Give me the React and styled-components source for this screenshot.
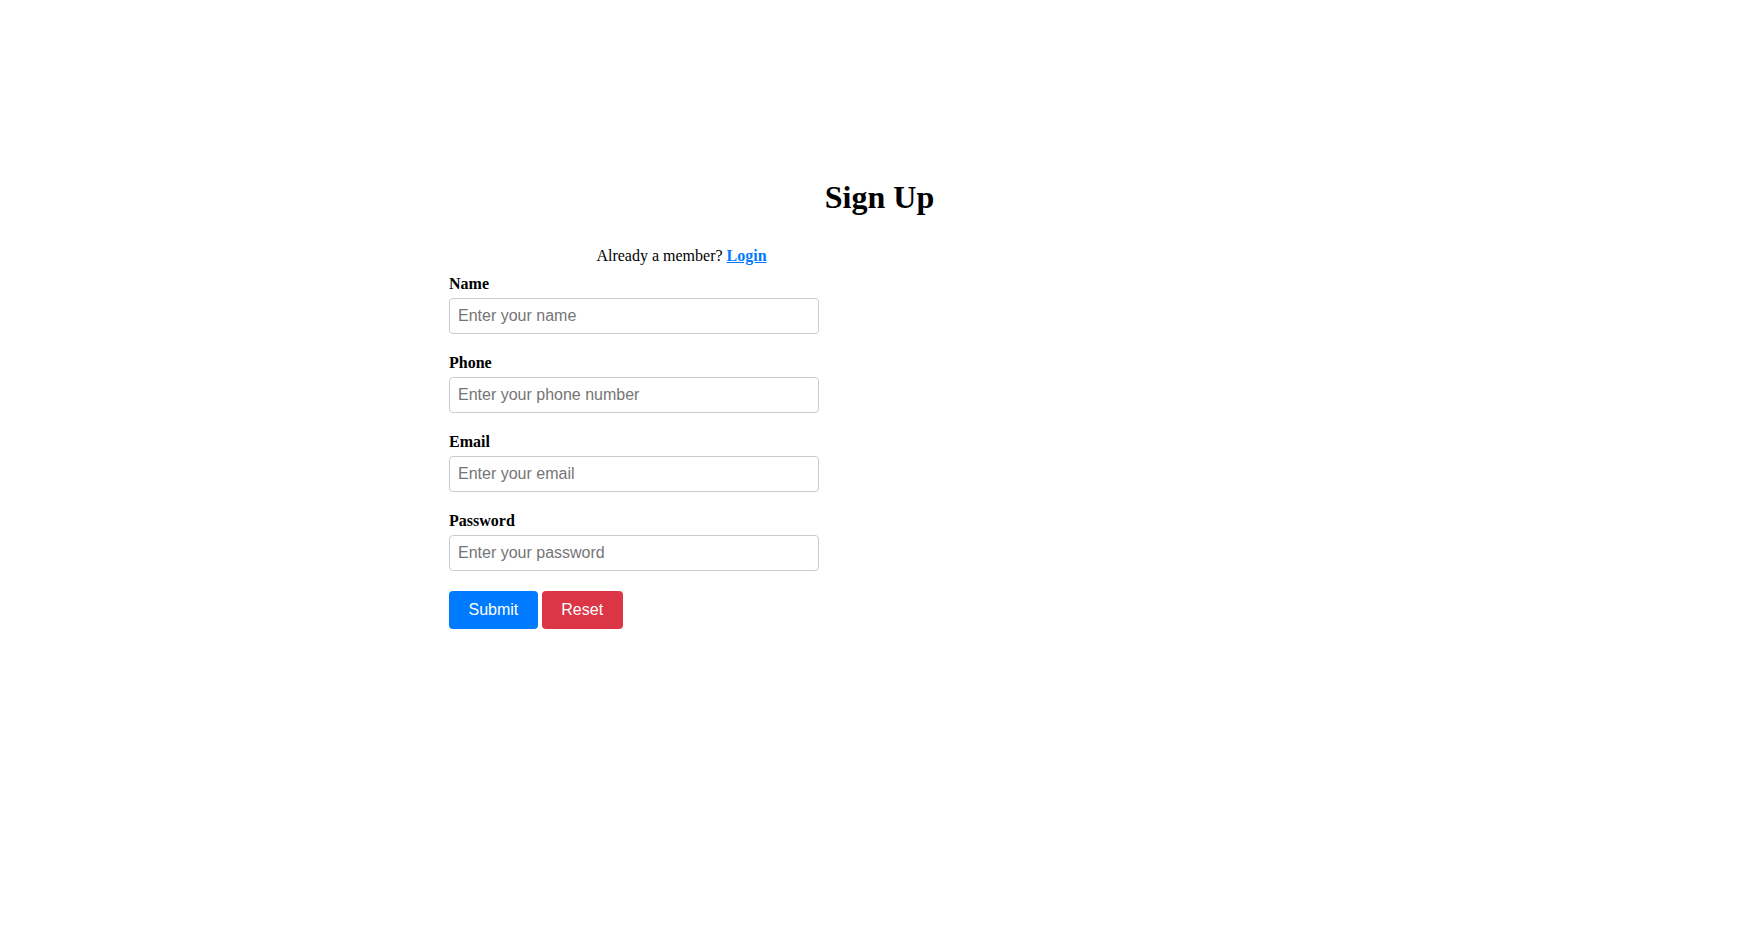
import styled, { createGlobalStyle } from "styled-components";

const GlobalStyle = createGlobalStyle`
  body {
    margin: 0;
    background: #fff;
    font-family: "Liberation Serif", "Times New Roman", serif;
    color: #000;
  }
`;

export default function App() {
  return (
    <>
      <GlobalStyle />
      <Page>
        <Title>Sign Up</Title>
        <FormWrapper>
          <MemberText>
            Already a member? <LoginLink href="#">Login</LoginLink>
          </MemberText>
          <form>
            <Field>
              <Label>Name</Label>
              <Input type="text" placeholder="Enter your name" />
            </Field>
            <Field>
              <Label>Phone</Label>
              <Input type="text" placeholder="Enter your phone number" />
            </Field>
            <Field>
              <Label>Email</Label>
              <Input type="email" placeholder="Enter your email" />
            </Field>
            <Field>
              <Label>Password</Label>
              <Input type="password" placeholder="Enter your password" />
            </Field>
            <ButtonRow>
              <Button type="button" $color="#007bff">
                Submit
              </Button>
              <Button type="button" $color="#dc3545">
                Reset
              </Button>
            </ButtonRow>
          </form>
        </FormWrapper>
      </Page>
    </>
  );
}

const Page = styled.div`
  padding-top: 179px;
`;

const Title = styled.h1`
  margin: 0 0 31px;
  text-align: center;
  font-size: 32px;
  font-weight: 700;
`;

const FormWrapper = styled.div`
  margin-left: 449px;
  width: 465px;
`;

const MemberText = styled.p`
  margin: 0 0 10px;
  text-align: center;
  font-size: 16px;
`;

const LoginLink = styled.a`
  color: #007bff;
  font-weight: 700;
  text-decoration: underline;
`;

const Field = styled.div`
  margin-bottom: 20px;
`;

const Label = styled.label`
  display: block;
  margin-bottom: 5px;
  font-size: 16px;
  font-weight: 700;
`;

const Input = styled.input`
  box-sizing: border-box;
  display: block;
  width: 370px;
  height: 36px;
  padding: 0 8px;
  border: 1px solid #ccc;
  border-radius: 4px;
  font-family: "Liberation Sans", Arial, sans-serif;
  font-size: 16px;
  color: #333;

  &::placeholder {
    color: #757575;
  }
  &:focus {
    outline: none;
  }
`;

const ButtonRow = styled.div`
  display: flex;
  gap: 4px;
`;

const Button = styled.button`
  padding: 10px 19.5px;
  border: none;
  border-radius: 4px;
  background-color: ${(p) => p.$color};
  color: #fff;
  font-family: "Liberation Sans", Arial, sans-serif;
  font-size: 16px;
  line-height: 18px;
  cursor: pointer;
`;
